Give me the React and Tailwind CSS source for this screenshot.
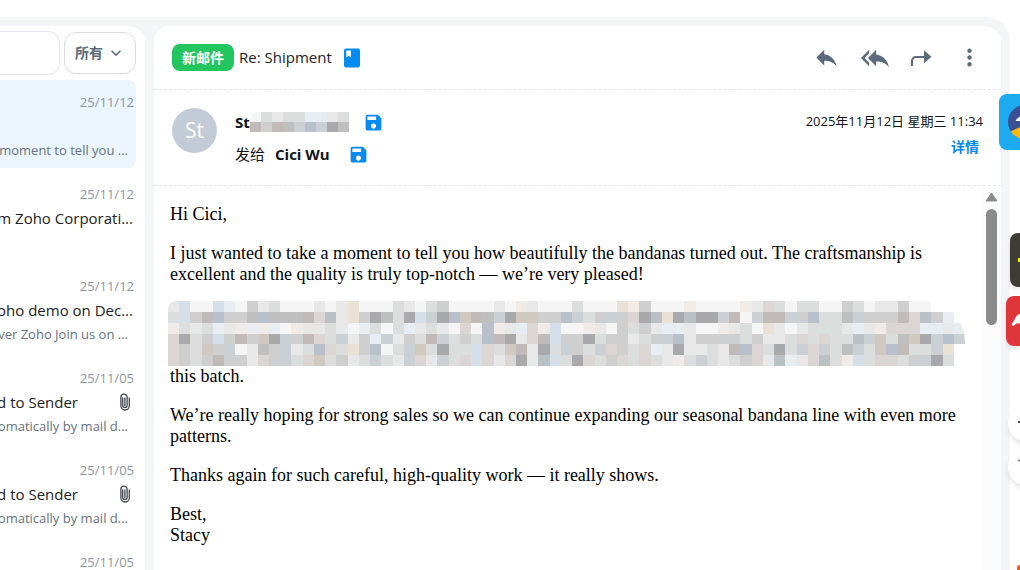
import React, { useState } from "react";
import {
  MdReply,
  MdReplyAll,
  MdMoreVert,
  MdSave,
  MdKeyboardArrowDown,
} from "react-icons/md";

const mails = [
  { date: "25/11/12", subject: "", snippet: "moment to tell you ..." },
  { date: "25/11/12", subject: "m Zoho Corporati...", snippet: "" },
  {
    date: "25/11/12",
    subject: "oho demo on Dec...",
    snippet: "ver Zoho Join us on ...",
  },
  {
    date: "25/11/05",
    subject: "d to Sender",
    snippet: "omatically by mail d...",
    attachment: true,
  },
  {
    date: "25/11/05",
    subject: "d to Sender",
    snippet: "omatically by mail d...",
    attachment: true,
  },
  { date: "25/11/05", subject: "", snippet: "" },
];

// One letter per mosaic cell, "." is an empty cell
const palette = {
  w: "#f5f5f5",
  e: "#e8e8e8",
  g: "#dcdddd",
  m: "#cfcfcf",
  d: "#bfbfc0",
  D: "#a9a9ab",
  b: "#d5dfe9",
  B: "#b8c0cc",
  p: "#dbd6d3",
  P: "#c0bab8",
  y: "#e8e1d4",
  t: "#d0c9c0",
  c: "#cad0d4",
  C: "#bac1c5",
  L: "#e8edf3",
  k: "#f1ebe7",
};

const bodyMosaic = [
  "ebwwbLwmegwwweweywwwgewgmwwwwewkewwwgwwwykmwwwkwwwwkepgwggwwmgweemww...",
  "gbmPBmmdBdddPpCeymDdgDbcDBtPdcDttmmBcgmcmpDCyDCDDcPwcPPcmBggdcmmmPpCmL.",
  "kgegLekLkLwkeegewLgwgLegewpwBkeLpkbwwkewmgmeLLewwkegwyewegggeLekpppLLeL",
  "pDgmbmPmtDcmPpgcemLcemgPcgmgBPDepPbmmDgmmegmcBemmmcgmeegpgpggCctgdtDcBc",
  "pmgtmcwedmcegBpgymBwgctgDggbpgtPeDgcmgcpmgpLeDeegePBpgDgcpcgdcgtBPggcy.",
  "pmgmPmmepmcgptgmegcgecpecgpbpepDeCbgDpgmpgpgekgcgegmpeCLepCgkbgppgmcDg.",
];

const nameMosaic = ["wgeggLLeg", "PmPdcBcDd"];

function Mosaic({ rows, className, label }) {
  return (
    <svg
      viewBox={`0 0 ${rows[0].length} ${rows.length}`}
      preserveAspectRatio="none"
      shapeRendering="crispEdges"
      role="img"
      aria-label={label}
      className={className}
    >
      {rows.map((row, y) =>
        row
          .split("")
          .map((c, x) =>
            palette[c] ? (
              <rect
                key={`${x}-${y}`}
                x={x}
                y={y}
                width="1"
                height="1"
                fill={palette[c]}
              />
            ) : null
          )
      )}
    </svg>
  );
}

function PaperclipIcon() {
  return (
    <svg
      viewBox="0 0 12 18"
      fill="none"
      stroke="#3f4750"
      strokeWidth="1.3"
      strokeLinecap="round"
      className="h-[18px] w-3 shrink-0"
    >
      <path d="M3.7 5v7.2a2.2 2.2 0 0 0 4.4 0V4.2a3.1 3.1 0 0 0-6.2 0v8.6a4.2 4.2 0 0 0 8.4 0V5" />
      <path d="M5.9 5v7.5" />
    </svg>
  );
}

function ForwardIcon() {
  return (
    <svg viewBox="0 0 22 18" className="h-[18px] w-[22px]">
      <path
        d="M2 17v-5a4 4 0 0 1 4-4h9"
        fill="none"
        stroke="currentColor"
        strokeWidth="2.2"
      />
      <path d="M14 1.200v13L21.500 7.700z" fill="currentColor" />
    </svg>
  );
}

function ContactBookIcon() {
  return (
    <svg viewBox="0 0 16 20" className="h-5 w-4">
      <rect y="0.5" width="16" height="19" rx="2" fill="#058bf2" />
      <path d="M2.3 2.5h4.6v7L4.6 7.8 2.3 9.5z" fill="#fff" />
    </svg>
  );
}

function MailItem({ mail, active, onClick }) {
  return (
    <li>
      <button
        type="button"
        onClick={onClick}
        className={`flex h-[88px] w-full flex-col items-end overflow-hidden rounded-r-lg pt-[11px] whitespace-nowrap ${
          active ? "bg-[#eaf5ff]" : "bg-white"
        }`}
      >
        <span className="pr-0.5 text-[13px] leading-[22px] text-[#8b97a3]">
          {mail.date}
        </span>
        <span
          className={`flex h-[26px] items-center justify-end gap-[41px] text-[15px] leading-[26px] text-[#1c2126] ${
            mail.attachment ? "pr-[5px]" : "pr-[3px]"
          }`}
        >
          {mail.subject}
          {mail.attachment && <PaperclipIcon />}
        </span>
        <span className="pr-2 text-[13px] leading-[22px] text-[#66727e]">
          {mail.snippet}
        </span>
      </button>
    </li>
  );
}

function MailList() {
  const [selected, setSelected] = useState(0);

  return (
    <aside className="w-[145px] shrink-0 overflow-hidden rounded-tr-2xl bg-white pr-[9px]">
      <div className="flex items-center gap-1 pt-[5px] pb-[5px]">
        <input
          type="text"
          aria-label="搜索邮件"
          className="h-11 min-w-0 flex-1 rounded-r-xl border border-l-0 border-[#e3e5e8] outline-none"
        />
        <div className="relative w-[72px] shrink-0">
          <select
            aria-label="筛选"
            className="h-[42px] w-full appearance-none rounded-xl border border-[#d9dde1] bg-white pl-[10px] text-sm font-bold text-[#5b6b7b] outline-none"
          >
            <option>所有</option>
          </select>
          <MdKeyboardArrowDown className="pointer-events-none absolute top-[11px] right-[10px] size-5 text-[#5b6b7b]" />
        </div>
      </div>
      <ul className="flex flex-col gap-1">
        {mails.map((mail, idx) => (
          <MailItem
            key={idx}
            mail={mail}
            active={idx === selected}
            onClick={() => setSelected(idx)}
          />
        ))}
      </ul>
    </aside>
  );
}

function MailHeader() {
  return (
    <header className="flex h-16 items-center justify-between border-b border-dashed border-[#e4e6e9] pr-[18px] pl-[18px]">
      <div className="flex items-center">
        <span className="rounded-lg bg-[#22c55e] px-[10px] text-sm leading-[27px] font-bold text-white">
          新邮件
        </span>
        <h1 className="ml-[5px] text-[15px] font-medium text-[#1c2126]">
          Re: Shipment
        </h1>
        <button type="button" aria-label="联系人" className="ml-3">
          <ContactBookIcon />
        </button>
      </div>
      <div className="flex items-center text-[#5b6b7b]">
        <button type="button" aria-label="回复">
          <MdReply className="size-[27px]" />
        </button>
        <button type="button" aria-label="全部回复" className="ml-[21px]">
          <MdReplyAll className="size-7" />
        </button>
        <button type="button" aria-label="转发" className="ml-[21px]">
          <ForwardIcon />
        </button>
        <button type="button" aria-label="更多" className="ml-6">
          <MdMoreVert className="size-[27px]" />
        </button>
      </div>
    </header>
  );
}

function SenderInfo() {
  return (
    <section className="flex h-24 border-b border-dashed border-[#e4e6e9] pt-[18px] pr-[18px] pl-[18px]">
      <div className="flex size-[45px] shrink-0 items-center justify-center rounded-full bg-[#c3cbd6] text-[21px] text-white">
        St
      </div>
      <div className="ml-[18px] flex-1 text-[15px] text-[#111418]">
        <div className="flex h-7 items-center">
          <span className="font-bold">St</span>
          <Mosaic
            rows={nameMosaic}
            label="hidden name"
            className="h-5 w-[99px] rounded-tl-lg"
          />
          <button type="button" aria-label="保存" className="ml-[14px]">
            <MdSave className="size-[21px] text-[#058bf2]" />
          </button>
        </div>
        <div className="flex h-9 items-center">
          <span>发给</span>
          <span className="ml-[10px] font-bold">Cici Wu</span>
          <button type="button" aria-label="保存" className="ml-[18px]">
            <MdSave className="size-[21px] text-[#058bf2]" />
          </button>
        </div>
      </div>
      <div className="flex flex-col items-end text-[13px] leading-[26px] text-[#111418]">
        <time>2025年11月12日 星期三 11:34</time>
        <a href="#details" className="pr-1 text-sm leading-[26px] font-bold text-[#058bf2]">
          详情
        </a>
      </div>
    </section>
  );
}

function MailBody() {
  return (
    <div className="flex min-h-0 flex-1">
      <article className="min-w-0 flex-1 overflow-hidden pt-[18px] pl-4 font-['Liberation_Serif',serif] text-lg leading-[21px] text-black">
        <p className="mb-[18px]">Hi Cici,</p>
        <p className="mb-4 pr-5">
          I just wanted to take a moment to tell you how beautifully the
          bandanas turned out. The craftsmanship is excellent and the quality is
          truly top-notch — we’re very pleased!
        </p>
        <Mosaic
          rows={bodyMosaic}
          label="hidden text"
          className="-ml-0.5 h-[65px] w-[797px] max-w-full rounded-tl-lg rounded-tr-[40px]"
        />
        <p className="mb-[18px]">this batch.</p>
        <p className="mb-[18px] pr-5">
          We’re really hoping for strong sales so we can continue expanding our
          seasonal bandana line with even more patterns.
        </p>
        <p className="mb-[18px]">
          Thanks again for such careful, high-quality work — it really shows.
        </p>
        <p>
          Best,
          <br />
          Stacy
        </p>
      </article>
      {/* Scrollbar */}
      <div className="flex w-[19px] shrink-0 flex-col items-center bg-[#fcfcfc] pt-1.5">
        <svg viewBox="0 0 13 10" className="h-[10px] w-[13px]">
          <path d="M6.5 1 12 9H1z" fill="#8b8b8b" stroke="#8b8b8b" strokeLinejoin="round" />
        </svg>
        <div className="mt-[7px] h-[116px] w-[11px] rounded-full bg-[#8b8b8b]" />
      </div>
    </div>
  );
}

// Widgets floating over the right edge of the window
function FloatingTools() {
  return (
    <>
      <button
        type="button"
        aria-label="助手"
        className="absolute top-[94px] right-0 h-14 w-[21px] overflow-hidden rounded-l-lg bg-[#1eaaf1]"
      >
        <svg viewBox="0 0 21 56" className="h-14 w-[21px]">
          <circle cx="26" cy="28" r="17" fill="#3b4f93" />
          <path d="M11.500 37.500 21 33v11.300A17 17 0 0 1 11.500 37.500z" fill="#fdb913" />
          <path d="M16.500 27c1-2 2.500-3.500 4.500-4.500V27z" fill="#fff" />
        </svg>
      </button>
      <button
        type="button"
        aria-label="工具"
        className="absolute top-[233px] right-0 flex h-[54px] w-[10px] items-center justify-end rounded-l-lg bg-[#3f3b37] shadow-md"
      >
        <span className="h-1 w-0.5 bg-[#f4f400]" />
      </button>
      <button
        type="button"
        aria-label="PDF"
        className="absolute top-[296px] right-0 h-[50px] w-[14px] rounded-l-lg bg-[#df363b] shadow-md"
      >
        <svg viewBox="0 0 14 50" className="h-[50px] w-[14px]">
          <path
            d="M6 29.500c-.5-1 0-2 .8-3l3.700-6.500c.8-1.200 2-1.700 3.500-1.700v9.200c-2-.6-3.500-.2-4.800 1-1 1-2.600 1.800-3.200 1z"
            fill="#fff"
          />
        </svg>
      </button>
      <button
        type="button"
        aria-label="收起"
        className="absolute top-[404px] -right-[26px] size-[38px] rounded-full bg-white shadow-md"
      >
        <svg viewBox="0 0 38 38" className="size-[38px]">
          <path d="M10 18h18" stroke="#444" strokeWidth="2" />
        </svg>
      </button>
      <button
        type="button"
        aria-label="置顶"
        className="absolute top-[448px] -right-[26px] size-[38px] rounded-full bg-white shadow-md"
      >
        <svg viewBox="0 0 38 38" className="size-[38px]">
          <path d="M10 12.500h18" stroke="#666" strokeWidth="1.500" />
        </svg>
      </button>
      <span className="absolute right-0 bottom-0 h-[5px] w-[3px] rounded-tl-full bg-[#f0591c]" />
    </>
  );
}

function App() {
  return (
    <div className="relative h-screen overflow-hidden bg-white pt-[17px] pr-[10px] font-['Open_Sans','Noto_Sans_CJK_SC',sans-serif]">
      <div className="flex h-full gap-[9px] rounded-tr-3xl bg-[#f4f5f7] pt-[9px] pr-[9px]">
        <MailList />
        <main className="flex min-w-0 flex-1 flex-col overflow-hidden rounded-t-2xl bg-white">
          <MailHeader />
          <SenderInfo />
          <MailBody />
        </main>
      </div>
      <FloatingTools />
    </div>
  );
}

export default App;
